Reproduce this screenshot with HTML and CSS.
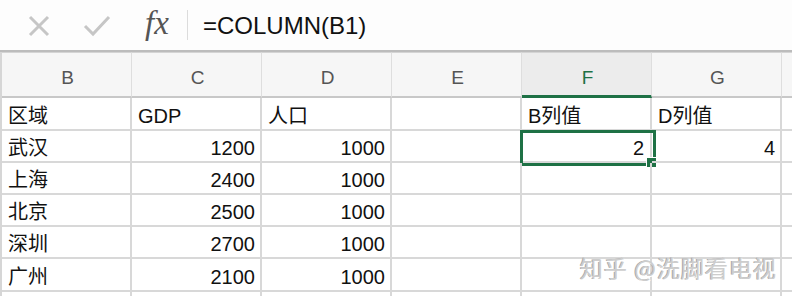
FILE: index.html
```html
<!DOCTYPE html>
<html lang="zh-CN">
<head>
<meta charset="utf-8"/>
<meta content="width=device-width, initial-scale=1.0" name="viewport"/>
<title>COLUMN</title>
<link rel="stylesheet" href="styles.css">
</head>
<body>
<div class="app">
  <div class="formula-bar">
    <span class="fb-icon">
      <svg width="24" height="24" viewBox="0 0 24 24"><path d="M3 3 L21 21 M21 3 L3 21" stroke="#c6c6c6" stroke-width="3" fill="none"/></svg>
    </span>
    <span class="fb-icon check">
      <svg width="28" height="24" viewBox="0 0 28 24"><path d="M2 12 L10 20 L26 3" stroke="#c6c6c6" stroke-width="3" fill="none"/></svg>
    </span>
    <span class="fx">fx</span>
    <span class="fb-sep"></span>
    <span class="formula">=COLUMN(B1)</span>
  </div>

  <div class="sheet">
    <div class="head">B</div>
    <div class="head">C</div>
    <div class="head">D</div>
    <div class="head">E</div>
    <div class="head active">F</div>
    <div class="head">G</div>
    <div class="head"></div>

    <div class="cell">区域</div>
    <div class="cell">GDP</div>
    <div class="cell">人口</div>
    <div class="cell"></div>
    <div class="cell">B列值</div>
    <div class="cell">D列值</div>
    <div class="cell"></div>

    <div class="cell">武汉</div>
    <div class="cell num">1200</div>
    <div class="cell num">1000</div>
    <div class="cell"></div>
    <div class="cell num selected">2<span class="sel-box"></span><span class="fill-handle"></span></div>
    <div class="cell num">4</div>
    <div class="cell"></div>

    <div class="cell">上海</div>
    <div class="cell num">2400</div>
    <div class="cell num">1000</div>
    <div class="cell"></div>
    <div class="cell"></div>
    <div class="cell"></div>
    <div class="cell"></div>

    <div class="cell">北京</div>
    <div class="cell num">2500</div>
    <div class="cell num">1000</div>
    <div class="cell"></div>
    <div class="cell"></div>
    <div class="cell"></div>
    <div class="cell"></div>

    <div class="cell">深圳</div>
    <div class="cell num">2700</div>
    <div class="cell num">1000</div>
    <div class="cell"></div>
    <div class="cell"></div>
    <div class="cell"></div>
    <div class="cell"></div>

    <div class="cell">广州</div>
    <div class="cell num">2100</div>
    <div class="cell num">1000</div>
    <div class="cell"></div>
    <div class="cell"></div>
    <div class="cell"></div>
    <div class="cell"></div>

    <div class="cell"></div>
    <div class="cell"></div>
    <div class="cell"></div>
    <div class="cell"></div>
    <div class="cell"></div>
    <div class="cell"></div>
    <div class="cell"></div>
  </div>

  <div class="watermark">知乎 @洗脚看电视</div>
</div>
</body>
</html>
```

FILE: styles.css
```css
body {
  margin: 0;
  background: #fff;
  font-family: 'Liberation Sans', 'Noto Sans CJK SC', sans-serif;
  overflow: hidden;
}

.app {
  position: relative;
  width: 792px;
  height: 296px;
  overflow: hidden;
}

/* formula bar */
.formula-bar {
  height: 50px;
  display: flex;
  align-items: center;
  background: #fdfdfd;
  border-bottom: 2px solid #bcbcbc;
  padding-left: 27px;
  box-sizing: content-box;
}
.fb-icon {
  display: flex;
  width: 24px;
  height: 24px;
  margin-right: 32px;
  margin-top: 2px;
}
.fb-icon.check {
  width: 28px;
  margin-right: 34px;
}
.fx {
  font-family: 'Liberation Serif', serif;
  font-style: italic;
  font-size: 33px;
  color: #555;
  margin-top: -3px;
  width: 28px;
}
.fb-sep {
  width: 1px;
  height: 30px;
  background: #dcdcdc;
  margin: 0 15px 0 14px;
}
.formula {
  font-size: 24px;
  color: #111;
  margin-top: 1px;
}

/* grid */
.sheet {
  display: grid;
  grid-template-columns: repeat(7, 130px);
  grid-template-rows: 46px 33px 32px 32px 32px 32px 33px 32px;
  border-left: 2px solid #d6d6d6;
}
.head {
  background: #f6f6f6;
  border-top: 1px solid #d4d4d4;
  border-right: 1px solid #dedede;
  border-bottom: 2px solid #c8c8c8;
  display: flex;
  align-items: center;
  justify-content: center;
  font-size: 19px;
  color: #555;
  padding-top: 6px;
  padding-left: 2px;
  box-sizing: border-box;
}
.head.active {
  background: #ececec;
  color: #1e7145;
  border-bottom: 3px solid #1e7145;
  padding-top: 7px;
}
.cell {
  position: relative;
  border-right: 2px solid #d8d8d8;
  border-bottom: 2px solid #d8d8d8;
  display: flex;
  align-items: flex-end;
  padding: 0 6px 1px 6px;
  font-size: 20px;
  line-height: 24px;
  color: #111;
  box-sizing: border-box;
  white-space: nowrap;
}
.cell.num {
  justify-content: flex-end;
  padding-right: 5px;
}
.cell.selected {
  padding-right: 6px;
}

.sel-box {
  position: absolute;
  left: -2px;
  top: -1px;
  width: 136px;
  height: 36px;
  border: 3px solid #1e7145;
  box-sizing: border-box;
}
.fill-handle {
  position: absolute;
  left: 124px;
  top: 26px;
  width: 9px;
  height: 9px;
  background: #1e7145;
  border: 1px solid #fff;
}

.watermark {
  position: absolute;
  left: 580px;
  top: 250px;
  font-family: 'Noto Sans CJK SC', sans-serif;
  font-size: 23px;
  color: #cdcdcd;
  letter-spacing: 1px;
  text-shadow: 1px 1px 0 #fff, -1px 0 0 #a8a8a8;
}
```
